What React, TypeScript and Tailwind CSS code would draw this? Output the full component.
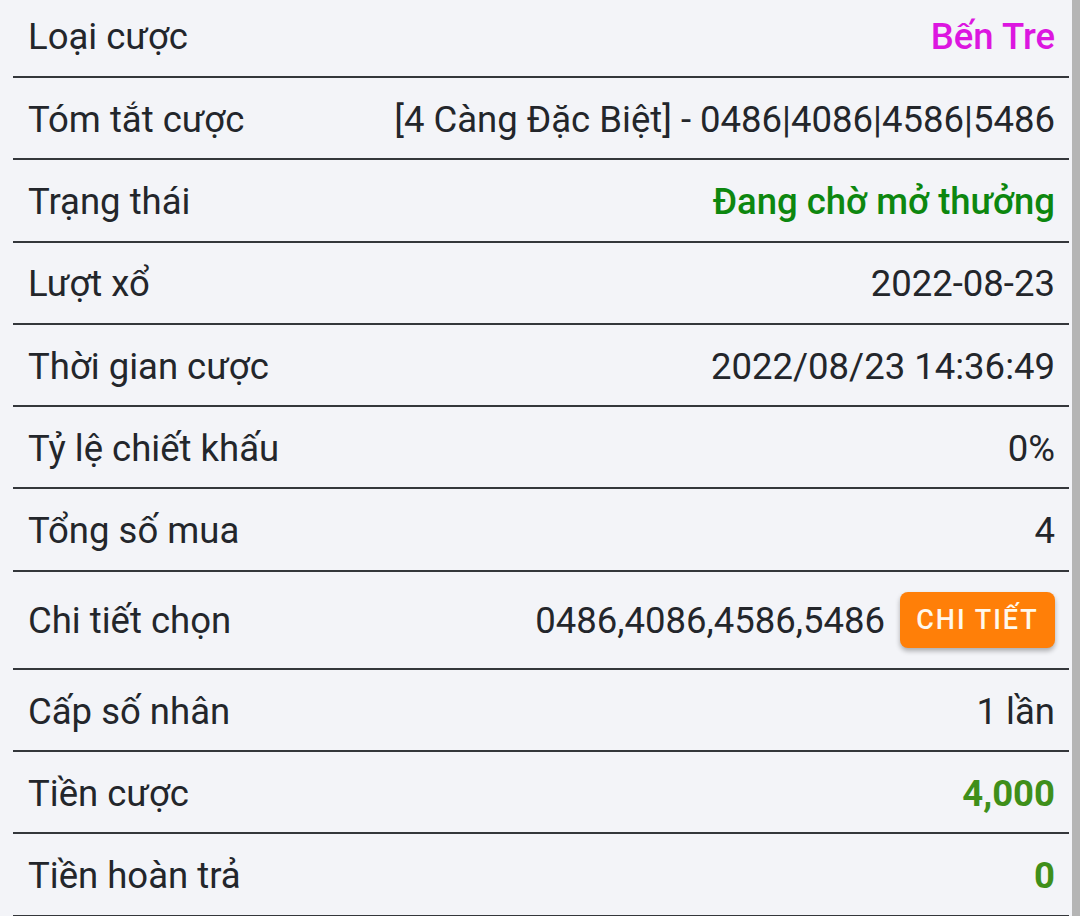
import React from "react";

type Row = {
  label: string;
  value: string;
  tone?: "magenta" | "status" | "money";
  action?: boolean;
};

const rows: Row[] = [
  { label: "Loại cược", value: "Bến Tre", tone: "magenta" },
  { label: "Tóm tắt cược", value: "[4 Càng Đặc Biệt] - 0486|4086|4586|5486" },
  { label: "Trạng thái", value: "Đang chờ mở thưởng", tone: "status" },
  { label: "Lượt xổ", value: "2022-08-23" },
  { label: "Thời gian cược", value: "2022/08/23 14:36:49" },
  { label: "Tỷ lệ chiết khấu", value: "0%" },
  { label: "Tổng số mua", value: "4" },
  { label: "Chi tiết chọn", value: "0486,4086,4586,5486", action: true },
  { label: "Cấp số nhân", value: "1 lần" },
  { label: "Tiền cược", value: "4,000", tone: "money" },
  { label: "Tiền hoàn trả", value: "0", tone: "money" },
];

function valueClass(tone?: Row["tone"]) {
  if (tone === "magenta") return "font-medium text-[#dc16e0]";
  if (tone === "status") return "font-medium text-[#0d870f]";
  if (tone === "money") return "font-bold text-[#3f8f1a]";
  return "text-[#23262b]";
}

function DetailRow({ row }: { row: Row }) {
  return (
    <div
      className={
        "flex items-center justify-between border-b-2 border-[#34373b] pl-[15px] pr-[14px] pt-[4px] " +
        (row.action ? "h-[98px]" : "h-[82.3px]")
      }
    >
      <span className="text-[36.5px] text-[#23262b]">{row.label}</span>
      <div className="flex items-center gap-[15px]">
        <span className={"text-[36.5px] " + valueClass(row.tone)}>{row.value}</span>
        {row.action && (
          <button className="-mt-[4px] h-[56px] w-[155px] rounded-[8px] bg-[#ff7f08] text-[27px] font-medium tracking-[2px] text-[#fff8ec] shadow-[0_3px_5px_rgba(0,0,0,0.3)]">
            CHI TIẾT
          </button>
        )}
      </div>
    </div>
  );
}

export default function App() {
  return (
    <div
      className="flex h-[916px] w-[1080px] overflow-hidden bg-[#f3f4f8]"
      style={{ fontFamily: "Roboto, 'Noto Sans', sans-serif" }}
    >
      <div className="ml-[13px] mr-[3px] mt-[-4.3px] flex-1">
        {rows.map((row) => (
          <DetailRow key={row.label} row={row} />
        ))}
      </div>
      <div className="w-[8px] bg-[#b5b5b5]" />
    </div>
  );
}
